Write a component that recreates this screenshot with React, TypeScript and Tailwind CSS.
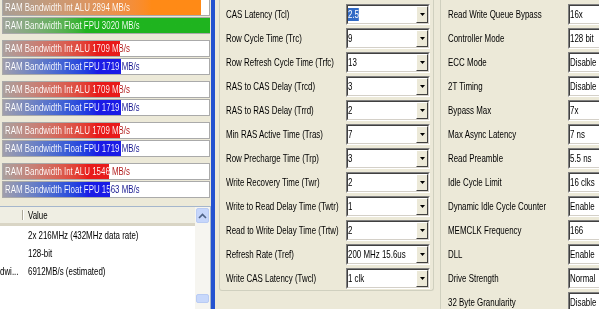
import React from "react";

type Kind = "orange" | "green" | "red" | "blue";

const fills: Record<Kind, string> = {
  orange: "bg-linear-to-r from-[#a89e94] to-[#ff8a16] to-75%",
  green: "bg-linear-to-r from-[#9ea49a] to-[#1fb41f] to-40%",
  red: "bg-linear-to-r from-[#aaa09e] to-[#e81a1a] to-80%",
  blue: "bg-linear-to-r from-[#a09eac] to-[#1a1ae6] to-80%",
};

const ink: Record<Kind, string> = {
  orange: "#a85a10",
  green: "#187018",
  red: "#b01818",
  blue: "#181890",
};

const bars: [string, number, Kind][][] = [
  [
    ["Int ALU", 2894, "orange"],
    ["Float FPU", 3020, "green"],
  ],
  [
    ["Int ALU", 1709, "red"],
    ["Float FPU", 1719, "blue"],
  ],
  [
    ["Int ALU", 1709, "red"],
    ["Float FPU", 1719, "blue"],
  ],
  [
    ["Int ALU", 1709, "red"],
    ["Float FPU", 1719, "blue"],
  ],
  [
    ["Int ALU", 1546, "red"],
    ["Float FPU", 1563, "blue"],
  ],
];

const timings: [string, string][] = [
  ["CAS Latency (Tcl)", "2.5"],
  ["Row Cycle Time (Trc)", "9"],
  ["Row Refresh Cycle Time (Trfc)", "13"],
  ["RAS to CAS Delay (Trcd)", "3"],
  ["RAS to RAS Delay (Trrd)", "2"],
  ["Min RAS Active Time (Tras)", "7"],
  ["Row Precharge Time (Trp)", "3"],
  ["Write Recovery Time (Twr)", "2"],
  ["Write to Read Delay Time (Twtr)", "1"],
  ["Read to Write Delay Time (Trtw)", "2"],
  ["Refresh Rate (Tref)", "200 MHz 15.6us"],
  ["Write CAS Latency (Twcl)", "1 clk"],
];

const controller: [string, string][] = [
  ["Read Write Queue Bypass", "16x"],
  ["Controller Mode", "128 bit"],
  ["ECC Mode", "Disable"],
  ["2T Timing", "Disable"],
  ["Bypass Max", "7x"],
  ["Max Async Latency", "7 ns"],
  ["Read Preamble", "5.5 ns"],
  ["Idle Cycle Limit", "16 clks"],
  ["Dynamic Idle Cycle Counter", "Enable"],
  ["MEMCLK Frequency", "166"],
  ["DLL", "Enable"],
  ["Drive Strength", "Normal"],
  ["32 Byte Granularity", "Disable"],
];

// the screenshot's font is squeezed horizontally, so text is narrowed
function T({
  children,
  className = "",
  style,
}: {
  children: React.ReactNode;
  className?: string;
  style?: React.CSSProperties;
}) {
  return (
    <span
      className={`inline-block origin-left scale-x-[0.72] whitespace-nowrap leading-[13px] ${className}`}
      style={style}
    >
      {children}
    </span>
  );
}

function Bar({ name, value, kind }: { name: string; value: number; kind: Kind }) {
  const text = `RAM Bandwidth ${name} ${value} MB/s`;
  const fill = (value / 3020) * 207;
  // text is white over the fill and coloured past it
  const edge = (fill - 2) / 0.72;
  return (
    <div className="relative h-[17px] border border-[#aaaaaa] bg-white">
      <div className={`absolute inset-y-0 left-0 ${fills[kind]}`} style={{ width: fill }} />
      <div className="relative flex h-full items-center pl-[2px]">
        <T
          className="bg-clip-text text-transparent"
          style={{
            backgroundImage: `linear-gradient(to right, #ffffff ${edge}px, ${ink[kind]} ${edge}px)`,
          }}
        >
          {text}
        </T>
      </div>
    </div>
  );
}

function Combo({ value, selected }: { value: string; selected?: boolean }) {
  return (
    <div className="flex h-[21px] w-[84px] shrink-0 border border-t-[#808080] border-l-[#808080] border-r-white border-b-white">
      <div className="flex min-w-0 flex-1 border border-t-[#404040] border-l-[#404040] border-r-[#d4d0c8] border-b-[#d4d0c8] bg-white">
        <div className="flex min-w-0 flex-1 items-center overflow-hidden">
          <T className={selected ? "bg-[#316ac5] text-white" : ""}>{value}</T>
        </div>
        <div className="flex w-[12px] shrink-0 items-center justify-center border border-t-white border-l-white border-r-[#404040] border-b-[#404040] bg-[#ece9d8]">
          <svg width="5" height="3" viewBox="0 0 5 3">
            <polygon points="0,0 5,0 2.5,3" fill="#000" />
          </svg>
        </div>
      </div>
    </div>
  );
}

function Row({ label, value, selected }: { label: string; value: string; selected?: boolean }) {
  return (
    <div className="flex h-[24px] items-center">
      <div className="w-[120px] shrink-0">
        <T>{label}</T>
      </div>
      <Combo value={value} selected={selected} />
    </div>
  );
}

export default function App() {
  return (
    <div className="flex h-[309px] w-[599px] overflow-hidden bg-[#ece9d8] font-['Liberation_Sans',Arial,sans-serif] text-[11px] leading-[13px] text-black">
      {/* left: bandwidth bars + info list */}
      <div className="flex w-[211px] shrink-0 flex-col">
        <div className="-mt-[1px] flex flex-col gap-[6px] pl-[2px] pr-[1px]">
          {bars.map((pair, i) => (
            <div key={i} className="flex flex-col gap-[1px]">
              {pair.map(([name, value, kind]) => (
                <Bar key={name} name={name} value={value} kind={kind} />
              ))}
            </div>
          ))}
        </div>
        <div className="mt-[8px] flex flex-1 border-t border-r border-[#a5b6cc] bg-white">
          <div className="flex min-w-0 flex-1 flex-col">
            <div className="flex h-[19px] items-center border-b-[3px] border-b-[#d9d5c5] bg-[#efeee3]">
              <div className="flex h-full w-[24px] shrink-0 justify-end py-[3px]">
                <div className="w-[1px] bg-[#aca899]" />
                <div className="w-[1px] bg-white" />
              </div>
              <div className="pl-[4px]">
                <T>Value</T>
              </div>
            </div>
            {[
              ["", "2x 216MHz (432MHz data rate)"],
              ["", "128-bit"],
              ["dwi...", "6912MB/s (estimated)"],
            ].map(([a, b], i) => (
              <div key={i} className="flex h-[18px] items-center">
                <div className="w-[24px] shrink-0 overflow-hidden">
                  <T>{a}</T>
                </div>
                <div className="pl-[4px]">
                  <T>{b}</T>
                </div>
              </div>
            ))}
          </div>
          <div className="flex w-[15px] shrink-0 flex-col bg-[#f6f5f0] px-[1px] pt-[1px]">
            <div className="flex h-[15px] items-center justify-center rounded-[2px] border border-[#b9cbf3] bg-[#c6d6fb]">
              <svg width="9" height="6" viewBox="0 0 9 6">
                <path d="M1 5 L4.5 1.5 L8 5" stroke="#4d6185" strokeWidth="1.6" fill="none" />
              </svg>
            </div>
            <div className="mt-auto mb-[6px] h-[9px] rounded-[2px] border border-[#b9cbf3] bg-[#c8d8fb]" />
          </div>
        </div>
      </div>

      {/* window frame divider */}
      <div className="w-[4px] shrink-0 bg-[#2453d0]" />

      {/* DRAM timings */}
      <div className="ml-[4px] w-[215px] shrink-0 self-start rounded-b-[3px] border-x border-b border-[#d0d0bf] pt-[2px] pr-[3px] pl-[6px]">
        {timings.map(([label, value], i) => (
          <Row key={label} label={label} value={value} selected={i === 0} />
        ))}
      </div>

      {/* controller settings */}
      <div className="ml-[6px] min-w-0 flex-1 overflow-hidden border-l border-[#d0d0bf] pt-[2px] pl-[7px]">
        {controller.map(([label, value]) => (
          <Row key={label} label={label} value={value} />
        ))}
      </div>
    </div>
  );
}
